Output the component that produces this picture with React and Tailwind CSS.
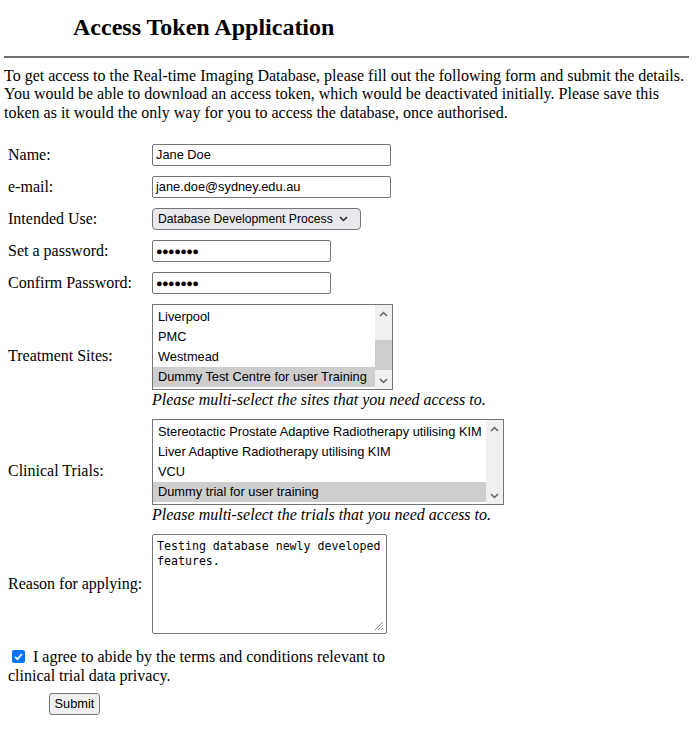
import React from "react";

const ctlFont = "font-['Liberation_Sans',Arial,sans-serif] text-black whitespace-nowrap";
const ctl = `${ctlFont} text-[12.8px]`;

function ChevronUp() {
  return (
    <svg width="9" height="6" viewBox="0 0 9 6" className="block shrink-0">
      <path d="M1 5 L4.5 1.5 L8 5" fill="none" stroke="#606060" strokeWidth="1.5" />
    </svg>
  );
}

function ChevronDown({ color = "#606060" }) {
  return (
    <svg width="9" height="6" viewBox="0 0 9 6" className="block shrink-0">
      <path d="M1 1 L4.5 4.5 L8 1" fill="none" stroke={color} strokeWidth="1.5" />
    </svg>
  );
}

function ListBox({ items, selected, width, thumb }) {
  return (
    <div
      className={`${ctl} flex h-[86px] border border-[#767676] bg-white`}
      style={{ width }}
    >
      <div className="flex-1 pt-[2px]">
        {items.map((it) => (
          <div
            key={it}
            className={`h-[20px] leading-[20px] pl-[5px] ${
              it === selected ? "bg-[#cecece]" : ""
            }`}
          >
            {it}
          </div>
        ))}
      </div>
      <div className="w-[17px] bg-[#f0f0f0] flex flex-col">
        <div className="h-[17px] flex items-center justify-center">
          <ChevronUp />
        </div>
        <div className="flex-1 flex flex-col">
          {thumb ? (
            <>
              <div className="h-[18px]" />
              <div className="h-[30px] bg-[#cdcdcd]" />
            </>
          ) : null}
        </div>
        <div className="h-[17px] flex items-center justify-center">
          <ChevronDown />
        </div>
      </div>
    </div>
  );
}

function Row({ label, children }) {
  return (
    <div className="flex items-center">
      <div className="w-[144px] shrink-0">{label}</div>
      <div>{children}</div>
    </div>
  );
}

function TextBox({ value, width, password }) {
  return (
    <div
      className={`${ctl} h-[22px] border border-[#767676] rounded-[2px] bg-white pl-[3px] flex items-center`}
      style={{ width }}
    >
      {password ? (
        <span className="text-[11px] tracking-[-0.6px] leading-none">●●●●●●●</span>
      ) : (
        value
      )}
    </div>
  );
}

export default function App() {
  return (
    <div className="font-['Liberation_Serif','Times_New_Roman',serif] text-[16px] leading-[1.15] text-black bg-white min-h-[734px]">
      <h2 className="pt-[13px] pl-[73px] text-[24px] font-bold leading-[28px]">
        Access Token Application
      </h2>
      <div className="mt-[15px] ml-[4px] w-[685px] h-[2px] bg-[#6f6f6f]" />
      <p className="mt-[9px] px-[4px] w-[692px]">
        To get access to the Real-time Imaging Database, please fill out the following form and
        submit the details. You would be able to download an access token, which would be
        deactivated initially. Please save this token as it would the only way for you to access
        the database, once authorised.
      </p>

      <div className="mt-[22px] ml-[8px] flex flex-col gap-[10px]">
        <Row label="Name:">
          <TextBox value="Jane Doe" width={239} />
        </Row>
        <Row label="e-mail:">
          <TextBox value="jane.doe@sydney.edu.au" width={239} />
        </Row>
        <Row label="Intended Use:">
          <div
            className={`${ctlFont} text-[12.2px] h-[22px] w-[209px] border border-[#767676] rounded-[4px] bg-[#e9e9ed] pl-[5px] pr-[12px] flex items-center justify-between`}
          >
            <span>Database Development Process</span>
            <ChevronDown color="#222" />
          </div>
        </Row>
        <Row label="Set a password:">
          <TextBox password width={179} />
        </Row>
        <Row label="Confirm Password:">
          <TextBox password width={179} />
        </Row>
        <Row label="Treatment Sites:">
          <ListBox
            width={241}
            thumb
            items={["Liverpool", "PMC", "Westmead", "Dummy Test Centre for user Training"]}
            selected="Dummy Test Centre for user Training"
          />
          <div className="italic h-[19px] leading-[19px]">
            Please multi-select the sites that you need access to.
          </div>
        </Row>
        <Row label="Clinical Trials:">
          <ListBox
            width={352}
            items={[
              "Stereotactic Prostate Adaptive Radiotherapy utilising KIM",
              "Liver Adaptive Radiotherapy utilising KIM",
              "VCU",
              "Dummy trial for user training",
            ]}
            selected="Dummy trial for user training"
          />
          <div className="italic h-[19px] leading-[19px]">
            Please multi-select the trials that you need access to.
          </div>
        </Row>
        <Row label="Reason for applying:">
          <div className="relative w-[235px] h-[100px] border border-[#767676] rounded-[2px] bg-white pl-[4px] pt-[4px] font-['DejaVu_Sans_Mono','Liberation_Mono',monospace] text-[11.6px] leading-[15px]">
            <div>Testing database newly developed</div>
            <div>features.</div>
            <svg width="12" height="12" viewBox="0 0 12 12" className="absolute right-[2px] bottom-[2px]">
              <path d="M11 3 L3 11 M11 6 L6 11 M11 9 L9 11" stroke="#8a8a8a" strokeWidth="1" />
            </svg>
          </div>
        </Row>
      </div>

      <div className="mt-[13px] ml-[8px] w-[390px] leading-[19px]">
        <span className="inline-block align-[-1px] ml-[4px] mr-[4px] w-[13px] h-[13px] rounded-[2px] bg-[#0075ff]">
          <svg width="13" height="13" viewBox="0 0 13 13" className="block">
            <path d="M3 6.8 L5.4 9.2 L10 4" fill="none" stroke="white" strokeWidth="1.8" />
          </svg>
        </span>{" "}
        I agree to abide by the terms and conditions relevant to clinical trial data privacy.
      </div>

      <div className="mt-[8px] ml-[49px]">
        <div
          className={`${ctl} w-[51px] h-[22px] border border-[#767676] rounded-[3px] bg-[#efefef] flex items-center justify-center`}
        >
          Submit
        </div>
      </div>
    </div>
  );
}
